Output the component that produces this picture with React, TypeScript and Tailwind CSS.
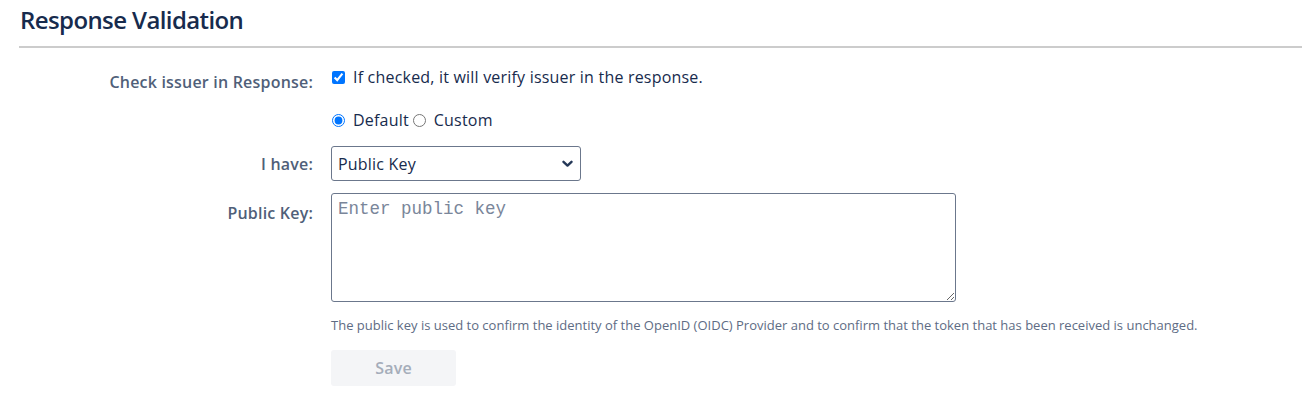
import { useState } from 'react';

const font = { fontFamily: '"Segoe UI", "Open Sans", sans-serif' };

function Chevron() {
  return (
    <svg className="h-[8px] w-[11px]" viewBox="0 0 11 8" fill="none" aria-hidden="true">
      <path d="M1.5 1.8L5.5 5.6L9.5 1.8" stroke="#253858" strokeWidth="2.4" strokeLinecap="round" strokeLinejoin="round" />
    </svg>
  );
}

export default function App() {
  const [checked, setChecked] = useState(true);
  const [mode, setMode] = useState<'default' | 'custom'>('default');

  return (
    <div className="min-h-[406px] w-full bg-white text-[16px] tracking-[0.2px] text-[#172b4d]" style={font}>
      {/* Section heading */}
      <div className="ml-[19px] border-b-2 border-[#cccccc] pb-[10px] pt-[4px]">
        <h2 className="pl-px text-[24px] font-semibold leading-[32px] tracking-[-0.6px] text-[#172b4d]">
          Response Validation
        </h2>
      </div>

      {/* Check issuer */}
      <div className="mt-[18px] flex items-start">
        <label className="w-[313px] shrink-0 pt-[5px] text-right font-semibold leading-[22px] text-[#505f79]">
          Check issuer in Response:
        </label>
        <div className="ml-[18px] flex items-center leading-[22px]">
          <input
            type="checkbox"
            checked={checked}
            onChange={(e) => setChecked(e.target.checked)}
            className="ml-px h-[13px] w-[13px]"
          />
          <span className="ml-[8px]">If checked, it will verify issuer in the response.</span>
        </div>
      </div>

      {/* Issuer mode */}
      <div className="mt-[16px] flex items-start">
        <div className="w-[313px] shrink-0" />
        <div className="ml-[18px] flex items-center leading-[22px]">
          <input
            type="radio"
            name="issuer"
            checked={mode === 'default'}
            onChange={() => setMode('default')}
            className="ml-px h-[13px] w-[13px]"
          />
          <span className="ml-[8px]">Default</span>
          <input
            type="radio"
            name="issuer"
            checked={mode === 'custom'}
            onChange={() => setMode('custom')}
            className="ml-[4px] h-[13px] w-[13px]"
          />
          <span className="ml-[8px]">Custom</span>
        </div>
      </div>

      {/* I have */}
      <div className="mt-[15px] flex items-center">
        <label className="w-[313px] shrink-0 text-right font-semibold leading-[22px] text-[#505f79]">I have:</label>
        <div className="relative ml-[18px]">
          <select
            defaultValue="public"
            className="h-[35px] w-[250px] appearance-none rounded-[3px] border border-[#6b778c] bg-white pl-[6px] pr-[30px] text-[16px] tracking-[0.2px] text-[#172b4d] outline-none"
            style={font}
          >
            <option value="public">Public Key</option>
            <option value="jwks">JWKS Endpoint</option>
            <option value="cert">Certificate</option>
          </select>
          <span className="pointer-events-none absolute right-[8px] top-[14px]">
            <Chevron />
          </span>
        </div>
      </div>

      {/* Public key */}
      <div className="mt-[12px] flex items-start">
        <label className="w-[313px] shrink-0 pt-[9px] text-right font-semibold leading-[22px] text-[#505f79]">
          Public Key:
        </label>
        <div className="ml-[18px]">
          <textarea
            placeholder="Enter public key"
            className="block h-[109px] w-[625px] rounded-[3px] border border-[#6b778c] bg-white px-[6px] py-[4px] text-[17.5px] leading-[22px] tracking-normal text-[#172b4d] outline-none placeholder:text-[#7a869a]"
            style={{ fontFamily: '"Liberation Mono", "Courier New", monospace' }}
          />
        </div>
      </div>

      {/* Help + save */}
      <div className="ml-[331px]">
        <p className="mt-[15px] text-[13px] leading-[17px] tracking-normal text-[#5e6c84]">
          The public key is used to confirm the identity of the OpenID (OIDC) Provider and to confirm that the token that has been received is unchanged.
        </p>
        <button
          type="button"
          disabled
          className="mt-[16px] h-[36px] w-[125px] rounded-[3px] bg-[#f4f5f7] text-[16px] font-semibold text-[#a5adba]"
        >
          Save
        </button>
      </div>
    </div>
  );
}
